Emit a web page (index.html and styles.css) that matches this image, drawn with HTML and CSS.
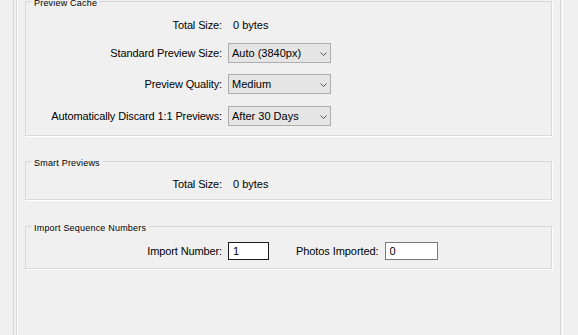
FILE: index.html
```html
<!DOCTYPE html>
<html>
<head>
<meta charset="utf-8">
<link rel="stylesheet" href="styles.css">
</head>
<body>
<div class="frame">
  <div class="page">
    <section class="group group-cache">
      <span class="legend">Preview Cache</span>
      <div class="form form-cache">
        <div class="lbl">Total Size:</div>
        <div class="val">0 bytes</div>
        <div class="lbl">Standard Preview Size:</div>
        <div class="select"><span>Auto (3840px)</span><svg class="chev" width="7" height="4" viewBox="0 0 7 4"><polyline points="0.5,0.5 3.5,3.5 6.5,0.5" fill="none" stroke="#555" stroke-width="1"/></svg></div>
        <div class="lbl">Preview Quality:</div>
        <div class="select"><span>Medium</span><svg class="chev" width="7" height="4" viewBox="0 0 7 4"><polyline points="0.5,0.5 3.5,3.5 6.5,0.5" fill="none" stroke="#555" stroke-width="1"/></svg></div>
        <div class="lbl">Automatically Discard 1:1 Previews:</div>
        <div class="select"><span>After 30 Days</span><svg class="chev" width="7" height="4" viewBox="0 0 7 4"><polyline points="0.5,0.5 3.5,3.5 6.5,0.5" fill="none" stroke="#555" stroke-width="1"/></svg></div>
      </div>
    </section>
    <section class="group group-smart">
      <span class="legend">Smart Previews</span>
      <div class="form">
        <div class="lbl">Total Size:</div>
        <div class="val">0 bytes</div>
      </div>
    </section>
    <section class="group group-import">
      <span class="legend">Import Sequence Numbers</span>
      <div class="form">
        <div class="lbl">Import Number:</div>
        <div class="inline">
          <input class="field field-focus" type="text" value="1">
          <span class="lbl2">Photos Imported:</span>
          <input class="field field-wide" type="text" value="0">
        </div>
      </div>
    </section>
  </div>
</div>
</body>
</html>
```
FILE: styles.css
```css
html, body {
  margin: 0;
  padding: 0;
  background: #f0f0f0;
  height: 335px;
  overflow: hidden;
}
body {
  font-family: "Liberation Sans", Arial, sans-serif;
  font-size: 11px;
  color: #000;
}
.frame {
  margin-left: 13px;
  width: 550px;
  height: 335px;
  box-sizing: border-box;
  border-left: 1px solid #d6d6d6;
  border-right: 1px solid #ffffff;
  display: flex;
}
.page {
  flex: 1;
  margin-left: 2px;
  margin-right: 1px;
  border-left: 1px solid #dadada;
  border-right: 1px solid #d6d6d6;
  box-shadow: inset 1px 0 0 #ffffff;
  padding: 0 8px;
}
.group {
  position: relative;
  border: 1px solid #d9d9d9;
  box-shadow: 1px 1px 0 #ffffff;
}
.legend {
  position: absolute;
  top: -4px;
  left: 6px;
  padding: 0 2px;
  background: #f0f0f0;
  font-size: 9px;
  line-height: 11px;
  letter-spacing: 0.2px;
  white-space: nowrap;
}
.group-cache {
  margin-top: 1px;
  padding: 13px 0 9px;
}
.group-smart {
  margin-top: 25px;
  padding: 12px 0 5px;
}
.group-import {
  margin-top: 26px;
  padding: 14px 0 7px;
}
.form {
  display: grid;
  grid-template-columns: 196px auto;
  column-gap: 6px;
  grid-auto-rows: 20px;
  align-items: start;
}
.form-cache {
  grid-template-rows: 28px 31px 32px 20px;
}
.lbl {
  text-align: right;
  line-height: 20px;
  white-space: nowrap;
  letter-spacing: -0.12px;
}
.val {
  line-height: 20px;
  padding-left: 5px;
}
.select {
  width: 103px;
  height: 20px;
  box-sizing: border-box;
  border: 1px solid #adadad;
  background: #e5e5e5;
  display: flex;
  align-items: center;
  justify-content: space-between;
  padding: 0 3px 0 3px;
  line-height: 18px;
}
.chev {
  display: block;
  margin-top: 1px;
}
.inline {
  display: flex;
  align-items: center;
  height: 20px;
}
.field {
  box-sizing: border-box;
  height: 18px;
  width: 41px;
  margin: 0;
  border: 1px solid #7a7a7a;
  background: #fff;
  padding: 0 0 0 4px;
  font-family: "Liberation Sans", Arial, sans-serif;
  font-size: 11px;
  color: #000;
  outline: none;
}
.field-focus {
  border-color: #1a1a1a;
}
.field-wide {
  width: 53px;
}
.lbl2 {
  margin-left: 27px;
  margin-right: 6px;
  line-height: 20px;
  white-space: nowrap;
  letter-spacing: -0.08px;
}
```
